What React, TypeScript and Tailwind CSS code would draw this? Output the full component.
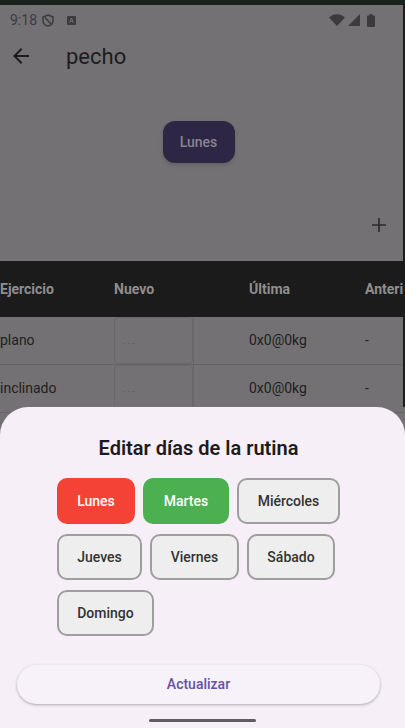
import React from "react";

type Day = { name: string; width: string; state: "red" | "green" | "off" };

const days: Day[] = [
  { name: "Lunes", width: "w-[78px]", state: "red" },
  { name: "Martes", width: "w-[86px]", state: "green" },
  { name: "Miércoles", width: "w-[103px]", state: "off" },
  { name: "Jueves", width: "w-[85px]", state: "off" },
  { name: "Viernes", width: "w-[89px]", state: "off" },
  { name: "Sábado", width: "w-[88px]", state: "off" },
  { name: "Domingo", width: "w-[97px]", state: "off" },
];

const rows = [
  { name: "plano", last: "0x0@0kg", prev: "-" },
  { name: "inclinado", last: "0x0@0kg", prev: "-" },
];

function StatusBar() {
  return (
    <div className="flex h-[26px] items-center justify-between pl-[10px] pr-[30px] pt-[4px] text-[#3b3a3c]">
      <div className="flex items-center">
        <span className="text-[14px] leading-none">9:18</span>
        <svg className="ml-[5px]" width="12" height="13" viewBox="0 0 12 13" fill="none">
          <path d="M6 1 L11 3 V6.5 C11 9.5 8.5 11.5 6 12 C3.5 11.5 1 9.5 1 6.5 V3 Z" stroke="#3b3a3c" strokeWidth="1.5" />
          <path d="M3 3.5 L9 10" stroke="#3b3a3c" strokeWidth="1.4" />
        </svg>
        <svg className="ml-[13px]" width="9" height="9" viewBox="0 0 9 9">
          <rect width="9" height="9" rx="1" fill="#3b3a3c" />
          <path d="M2.5 7 L4.5 2 L6.5 7 M3.3 5.3 H5.7" stroke="#747174" strokeWidth="1" fill="none" />
        </svg>
      </div>
      <div className="flex items-center gap-[3px]">
        <svg width="16" height="12" viewBox="0 0 16 12">
          <path d="M0 3.5 C4.5 -1 11.5 -1 16 3.5 L8 12 Z" fill="#3b3a3c" />
        </svg>
        <svg width="12" height="12" viewBox="0 0 12 12">
          <path d="M12 0 V12 H0 Z" fill="#3b3a3c" />
        </svg>
        <svg className="ml-[4px]" width="8" height="13" viewBox="0 0 8 13">
          <rect x="2.5" y="0" width="3" height="2" fill="#3b3a3c" />
          <rect x="0" y="1.5" width="8" height="11.5" rx="1" fill="#3b3a3c" />
        </svg>
      </div>
    </div>
  );
}

export default function App() {
  return (
    <div
      className="relative h-[728px] w-[405px] overflow-hidden bg-[#747174]"
      style={{ fontFamily: "Roboto, 'Noto Sans', sans-serif" }}
    >
      <div className="h-[5px] bg-[#1a221e]" />
      <StatusBar />

      {/* app bar */}
      <div className="flex h-[50px] items-center">
        <svg className="ml-[9px]" width="24" height="24" viewBox="0 0 24 24">
          <path d="M20 11H7.83l5.59-5.59L12 4l-8 8 8 8 1.41-1.41L7.83 13H20v-2z" fill="#1d1b1e" />
        </svg>
        <span className="ml-[33px] text-[22px] text-[#1d1b1e]">pecho</span>
      </div>

      <div className="flex justify-center pt-[40px]">
        <div className="ml-[-8px] flex h-[42px] w-[72px] items-center justify-center rounded-[12px] bg-[#2e2645] text-[14px] font-medium text-[#8a8590] shadow-[0_2px_4px_rgba(0,0,0,0.15)]">
          Lunes
        </div>
      </div>

      <div className="flex justify-end pr-[18px] pt-[54px]">
        <svg width="16" height="16" viewBox="0 0 16 16">
          <path d="M8 1 V15 M1 8 H15" stroke="#2a292b" strokeWidth="1.6" />
        </svg>
      </div>

      {/* table */}
      <div className="mt-[28px]">
        <div className="flex h-[56px] items-center bg-[#1c1b1c] text-[14px] font-bold text-[#8f8d8f]">
          <div className="w-[114px]">Ejercicio</div>
          <div className="w-[135px]">Nuevo</div>
          <div className="w-[116px]">Última</div>
          <div className="whitespace-nowrap">Anteri</div>
        </div>
        {rows.map((r) => (
          <div key={r.name} className="flex h-[48px] items-center border-b border-[#666466] text-[14px] text-[#1f1e1f]">
            <div className="w-[114px]">{r.name}</div>
            <div className="flex h-full w-[135px]">
              <div className="flex h-full w-[79px] items-center rounded-[4px] border border-[#6a686a] pl-[8px] text-[10px] tracking-[2px] text-[#5a585a]">
                ...
              </div>
              <div className="h-full w-px bg-[#686668]" />
            </div>
            <div className="w-[116px]">{r.last}</div>
            <div>{r.prev}</div>
          </div>
        ))}
      </div>

      <div className="absolute right-0 top-0 h-[407px] w-[2px] bg-[#1c1c1c]" />

      {/* bottom sheet */}
      <div className="absolute bottom-0 left-0 right-0 h-[321px] rounded-t-[28px] bg-[#f7eff8]">
        <div className="pr-[8px] pt-[26px] text-center text-[20px] font-semibold text-[#1d1b20]">
          Editar días de la rutina
        </div>
        <div className="ml-[57px] mt-[15px] flex w-[300px] flex-wrap gap-x-[8px] gap-y-[10px]">
          {days.map((d) => (
            <div
              key={d.name}
              className={`flex h-[46px] ${d.width} items-center justify-center rounded-[10px] text-[14px] font-medium ${
                d.state === "red"
                  ? "bg-[#f44336] text-white"
                  : d.state === "green"
                  ? "bg-[#4caf50] text-white"
                  : "border-2 border-[#9e9e9e] bg-[#eeeeee] text-[#333333]"
              }`}
            >
              {d.name}
            </div>
          ))}
        </div>
        <div className="ml-[17px] mr-[25px] mt-[29px] flex h-[39px] items-center justify-center rounded-full bg-[#f7f1f9] text-[14px] font-medium text-[#6750a4] shadow-[0_1px_3px_rgba(0,0,0,0.3)]">
          Actualizar
        </div>
        <div className="mx-auto mt-[15px] h-[3px] w-[107px] rounded-full bg-[#5f5d61]" />
      </div>
    </div>
  );
}
